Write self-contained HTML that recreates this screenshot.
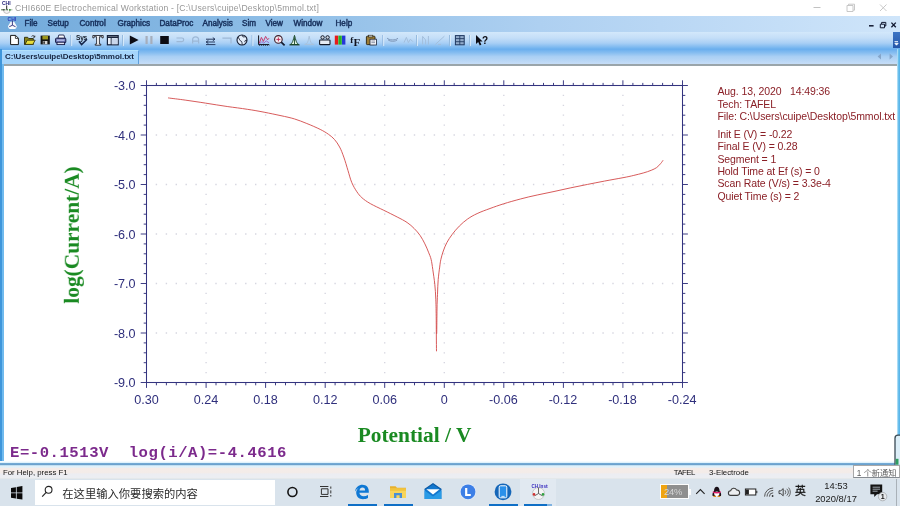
<!DOCTYPE html>
<html lang="zh">
<head>
<meta charset="utf-8">
<title>CHI660E Electrochemical Workstation</title>
<style>
html,body{margin:0;padding:0;}
body{width:900px;height:506px;overflow:hidden;background:#fff;position:relative;
 font-family:"Liberation Sans","Noto Sans CJK SC",sans-serif;font-size:8px;color:#1b2b4b;}
.abs{position:absolute;}
#root{position:absolute;left:0;top:0;width:900px;height:506px;overflow:hidden;will-change:transform;}
#title{left:0;top:0;width:900px;height:16px;background:#fff;}
#title .t{left:15px;top:2.5px;font-size:8.6px;color:#969696;white-space:nowrap;letter-spacing:0.225px;}
#menubar{left:0;top:16px;width:900px;height:16px;background:linear-gradient(90deg,#72aadb 0%,#8dbde6 30%,#aed0f1 60%,#cfe5fa 100%);}
#menubar span{position:absolute;top:2.9px;margin-left:0.5px;font-size:8.15px;color:#17305c;-webkit-text-stroke:0.45px #17305c;white-space:nowrap;}
#toolbar{left:0;top:32px;width:900px;height:17px;background:linear-gradient(180deg,#d3e8fb 0%,#c4def8 35%,#a9cff5 65%,#7db9f0 90%,#6cb0ee 100%);}
#tabbar{left:0;top:49px;width:900px;height:15px;background:linear-gradient(180deg,#68adee 0%,#86bdf0 25%,#a9cff4 50%,#c6ddf7 100%);}
#tab{left:1.5px;top:49.5px;width:137.5px;height:14.5px;background:#a6d5fb;border-right:1px solid #5d9fdc;border-top:1.2px solid #b4e2fc;box-sizing:border-box;}
#tab span{position:absolute;left:3.5px;top:1.1px;font-size:8px;font-weight:bold;color:#15233f;white-space:nowrap;letter-spacing:-0.03px;}
#grayline{left:3.5px;top:64px;width:893.5px;height:1.6px;background:#9aa5aa;}
#lborder{left:0;top:49px;width:1.5px;height:414px;background:#3f96da;}
#lborder2{left:1.5px;top:64px;width:2.3px;height:398.5px;background:#70baee;}
#rborder{left:896.7px;top:48.5px;width:3.3px;height:414px;background:linear-gradient(90deg,#c8e8fa,#6cc0ec 50%,#52b0e8);}
#bline{left:0;top:460.5px;width:900px;height:7px;background:linear-gradient(180deg,#fff 0,#dcf1fc 25%,#dcf1fc 30%,#6ea6d2 36%,#6a9fca 58%,#dcf1fc 66%,#e2f1fa 90%,#f2ecea 100%);}
#status{left:0;top:467.5px;width:900px;height:12px;background:linear-gradient(180deg,#f5ece8 0,#f3ece9 40%,#ecedf2 50%,#eceef2 82%,#dde3e4 92%,#d9e3ec 100%);}
#status span{position:absolute;top:0.5px;font-size:7.8px;color:#141414;white-space:nowrap;}
#taskbar{left:0;top:479px;width:900px;height:27px;background:#d9e3ec;}
#search{left:35px;top:480px;width:240px;height:24.5px;background:#fff;}
#search span{position:absolute;left:27.3px;top:4.6px;font-size:11.3px;color:#2a2a2a;white-space:nowrap;}
.ul{position:absolute;top:504px;height:2px;background:#0f6fc6;}
.tk{font-family:"Liberation Sans",sans-serif;font-size:12.6px;fill:#2f2f7c;}
.ttl{font-family:"Liberation Serif",serif;font-weight:bold;font-size:21.4px;fill:#1a8a22;}
#info{left:717.4px;top:85.4px;font-size:10.5px;line-height:12.35px;color:#8a1f26;white-space:nowrap;letter-spacing:-0.1px;}
#info .g2{margin-top:5.4px;}
#coord{left:10.3px;top:444.6px;font-family:"Liberation Mono",monospace;font-weight:bold;font-size:14.2px;color:#7c2a8c;white-space:pre;letter-spacing:0.48px;transform:scaleX(1.1);transform-origin:0 0;}
#tip{left:852.5px;top:464.5px;width:47px;height:13.5px;background:#fff;border:1px solid #a8a8a8;border-bottom:1.3px solid #858b92;box-sizing:border-box;}
#tip span{position:absolute;left:3.3px;top:0.2px;font-size:8.2px;color:#5c5c5c;white-space:nowrap;}
#clock{left:806px;top:478.6px;width:60px;text-align:center;font-size:9.4px;line-height:13.4px;color:#1a1a1a;}
</style>
</head>
<body>
<div id="root">

<!-- title bar -->
<div id="title" class="abs">
 <svg class="abs" style="left:0px;top:1px" width="14" height="14" viewBox="0 0 14 14">
  <text x="2" y="4" font-size="5" font-weight="bold" fill="#23237a" font-family="Liberation Sans,sans-serif">CHI</text>
  <path d="M3.400 8.800a3.400 3.700 0 0 0 6.800 0" fill="#f4f4f4" stroke="#b4b4b4" stroke-width=".8"/>
  <path d="M6.700 4.400v4.200" stroke="#222" stroke-width="1"/>
  <path d="M1.200 8.800h11" stroke="#2c5a2c" stroke-width="1" stroke-dasharray="1.600 1"/>
  <circle cx="9.800" cy="8.800" r=".9" fill="#3aa03a"/><circle cx="3.400" cy="8.800" r=".8" fill="#444"/>
 </svg>
 <div class="abs t">CHI660E Electrochemical Workstation - [C:\Users\cuipe\Desktop\5mmol.txt]</div>
 <svg class="abs" style="left:800px;top:0" width="100" height="16" viewBox="0 0 100 16">
  <path d="M13.5 7.5h7" stroke="#c2c2c2" stroke-width="1"/>
  <path d="M47 5.5h6v6h-6zM48.5 5.5v-1.3h6v6h-1.3" stroke="#c2c2c2" stroke-width=".9" fill="none"/>
  <path d="M80 4.5l6.5 6.5M86.5 4.5l-6.5 6.5" stroke="#c2c2c2" stroke-width=".9"/>
 </svg>
</div>

<!-- menu bar -->
<div id="menubar" class="abs">
 <svg class="abs" style="left:7px;top:1px" width="11" height="13" viewBox="0 0 11 13">
  <text x="0.600" y="4.200" font-size="4.800" font-weight="bold" fill="#2a38b8" font-family="Liberation Sans,sans-serif" textLength="8.600" lengthAdjust="spacingAndGlyphs">CHI</text>
  <path d="M1 9.200a4.400 2.400 0 0 0 8.800 0l-2.600-4.400h-3.600z" fill="#f6f8fb"/>
  <path d="M5.400 3.600v4.600l-3.200 1.600M5.400 8.200l3.200 1.600" stroke="#2a2a7a" stroke-width=".9" fill="none"/>
  <path d="M1.400 10.400a4 1.500 0 0 0 8 0" fill="#fff"/>
 </svg>
 <span style="left:24px">File</span><span style="left:47px">Setup</span><span style="left:79px">Control</span>
 <span style="left:117px">Graphics</span><span style="left:159px">DataProc</span><span style="left:202px">Analysis</span>
 <span style="left:241.5px">Sim</span><span style="left:265px">View</span><span style="left:293px">Window</span><span style="left:335px">Help</span>
 <svg class="abs" style="left:866px;top:4px" width="32" height="10" viewBox="0 0 32 10">
  <path d="M3 5.8h4.6" stroke="#101830" stroke-width="1.5"/>
  <path d="M14.3 4.2h4.2v3.6h-4.2zM15.6 4v-1.6h4.2v3.6h-1.2" stroke="#101830" stroke-width="1" fill="none"/>
  <path d="M25.4 2.6l4.4 4.6M29.8 2.6l-4.4 4.6" stroke="#101830" stroke-width="1.3"/>
 </svg>
</div>

<!-- toolbar -->
<div id="toolbar" class="abs">
<svg class="abs" style="left:0;top:0" width="900" height="17" viewBox="0 32 900 17">
 <g stroke="#8fb6de" stroke-width="1"><path d="M70.8 35v11M122.5 35v11M252 35v11M382.8 35v11M416.5 35v11M449.5 35v11M469.5 35v11"/></g>
 <g stroke="#e6f2fd" stroke-width=".8"><path d="M71.7 35v11M123.4 35v11M252.9 35v11M383.7 35v11M417.4 35v11M450.4 35v11M470.4 35v11"/></g>
 <!-- new -->
 <path d="M10.6 35.4h5l2.8 2.8v6.4h-7.8z" fill="#fff" stroke="#1a1a1a" stroke-width="1"/><path d="M15.4 35.6v2.8h2.8" fill="none" stroke="#1a1a1a" stroke-width=".8"/>
 <!-- open -->
 <path d="M24.5 44.5v-7.2h3.2l1 1.2h4.6v6z" fill="#8a8418" stroke="#2a2a10" stroke-width=".9"/>
 <path d="M25 44.4l2.2-4.2h8l-2.4 4.2z" fill="#e6dc3c" stroke="#2a2a10" stroke-width=".8"/>
 <path d="M31.5 36.4c1.2-1.2 2.6-.8 3 .4m.3-1.2v1.6h-1.6" stroke="#1a1a1a" stroke-width=".8" fill="none"/>
 <!-- save -->
 <rect x="40.6" y="35.6" width="9.2" height="8.8" fill="#141414"/>
 <rect x="42.4" y="35.8" width="5.6" height="3.6" fill="#9c961c"/>
 <rect x="42.8" y="41" width="4.6" height="3.2" fill="#d8d8d8"/><rect x="43.4" y="41.4" width="1.4" height="2.4" fill="#141414"/>
 <!-- print -->
 <path d="M57.800 38.400l1-3.400h5l1.200 3.400z" fill="#fafafc" stroke="#1c2048" stroke-width=".9"/>
 <rect x="55.600" y="38.200" width="10.200" height="4.600" rx=".8" fill="#7882c0" stroke="#161a44" stroke-width="1"/>
 <rect x="57" y="42.200" width="7.600" height="2.400" fill="#e4e6f4" stroke="#161a44" stroke-width=".9"/>
 <path d="M57 40.200h7.400" stroke="#dfe3ff" stroke-width=".8"/>
 <!-- sys check -->
 <text x="76" y="40.200" font-size="6.600" font-weight="bold" fill="#141c28" font-family="Liberation Sans,sans-serif" letter-spacing="-.25">Sys</text>
 <path d="M79 41.200l2.600 3.400 5.400-5.400" stroke="#16264a" stroke-width="1.600" fill="none"/>
 <!-- T -->
 <path d="M92.800 35.500h10.400v2.400h-1.200v-1.200h-2.600v7.400h1.400v1.100h-5.600v-1.100h1.400v-7.400h-2.600v1.200h-1.200z" fill="#fbfcfe" stroke="#1c1e26" stroke-width=".85"/>
 <!-- panel -->
 <rect x="107.400" y="35.600" width="10.800" height="9.200" fill="#e9eff8" stroke="#18243c" stroke-width="1.200"/>
 <path d="M107.400 37.200h10.800" stroke="#18243c" stroke-width="1.600"/>
 <path d="M111.200 37.400v7.400" stroke="#18243c" stroke-width="1"/>
 <rect x="111.800" y="38.400" width="5.800" height="5.800" fill="#c9d6ea"/>
 <!-- play / pause / stop -->
 <path d="M129.8 35.4v9l8.8-4.5z" fill="#0c0c14"/>
 <path d="M146.6 36v8M151.4 36v8" stroke="#a6aebc" stroke-width="2.2"/>
 <rect x="160.2" y="36" width="8.6" height="8" fill="#0c0c14"/>
 <!-- disabled icons -->
 <g stroke="#9db8d6" stroke-width="1.2" fill="none">
  <path d="M176.5 38h5.4a1.8 1.8 0 0 1 0 3.6h-5.4"/>
  <path d="M192.6 43.4v-3.6a3 3 0 0 1 6 0v3.6M192 41.2h7.2"/>
  <path d="M222.4 38.2h8.6v5.2"/>
 </g>
 <!-- exchange -->
 <path d="M206 39.2h8.8M212.8 37.6l2.2 1.6-2.2 1.6M215 42h-8.8M208.4 40.4l-2.2 1.6 2.2 1.6M206 44.6h9.4" stroke="#1a2a50" stroke-width=".9" fill="none"/>
 <!-- globe -->
 <circle cx="242" cy="40" r="5" fill="#e4eefa" stroke="#141c30" stroke-width="1.1"/>
 <path d="M238 37.4c2 1 1 3 2.6 3.4s1.4 2.6 1.6 4M242.4 35.2c-.6 1.6 1.2 2 2.4 1.6M247 40.4c-1.4-.6-2.6.4-2 1.800" stroke="#141c30" stroke-width=".9" fill="none"/>
 <!-- graph -->
 <path d="M258.6 35.4v9.200h10.600" stroke="#101018" stroke-width="1" fill="none"/>
 <path d="M259 45.400h10.400" stroke="#101018" stroke-width=".6" stroke-dasharray="1 1" fill="none"/>
 <path d="M259.400 43l2-5.600 2 4 2.200-5 2 3.400 1.400-1.600" stroke="#c83c6c" stroke-width="1" fill="none"/>
 <path d="M259.400 44l2.400-2.400 2 1.600 2.400-2.400 2.800 2" stroke="#9a5ac0" stroke-width=".8" fill="none"/>
 <!-- zoom -->
 <circle cx="278.400" cy="39.400" r="3.800" fill="#f6eef2" stroke="#3a1c28" stroke-width="1.100"/>
 <path d="M276.400 39.400h4M278.400 37.400v4" stroke="#c02050" stroke-width=".9"/>
 <path d="M281.200 42.200l3.400 3.200" stroke="#141c30" stroke-width="1.700"/>
 <!-- peak -->
 <path d="M289.400 44.900h10.200" stroke="#16301f" stroke-width="1"/>
 <path d="M290.200 44.500c2.300-.9 3-4.400 4.300-9.100c1.300 4.700 2 8.200 4.300 9.100z" fill="#e2f3e6" stroke="#1b4a2c" stroke-width="1"/>
 <path d="M294.500 37.400v7" stroke="#1b4a2c" stroke-width=".9"/>
 <!-- peak disabled -->
 <path d="M304.400 44.400h9.800M305.200 44.200c2.400-.4 3-3 4-8c1 5 1.600 7.600 4 8" fill="none" stroke="#a9c2dc" stroke-width="1"/>
 <!-- camera -->
 <rect x="319.600" y="40" width="10.400" height="4.600" rx=".6" fill="#e6ecf4" stroke="#141a28" stroke-width="1.100"/>
 <circle cx="322.600" cy="37.400" r="1.700" fill="#cfd8e4" stroke="#141a28" stroke-width="1"/>
 <circle cx="327.600" cy="37.400" r="1.700" fill="#cfd8e4" stroke="#141a28" stroke-width="1"/>
 <!-- RGB -->
 <rect x="334.800" y="35.600" width="3.400" height="9" fill="#e61c1c"/><rect x="338.400" y="35.600" width="3.400" height="9" fill="#28b428"/><rect x="342" y="35.600" width="3.400" height="9" fill="#2438d8"/>
 <!-- fF -->
 <text x="350.200" y="43.200" font-size="9" font-weight="bold" fill="#101420" font-family="Liberation Serif,serif">f</text>
 <text x="353.600" y="45.600" font-size="11" font-weight="bold" fill="#101420" font-family="Liberation Serif,serif">F</text>
 <!-- clipboard -->
 <rect x="366.400" y="36.200" width="8.600" height="8.400" rx=".8" fill="#9c7c34" stroke="#2a2410" stroke-width=".9"/>
 <rect x="368.600" y="35.200" width="4.200" height="1.800" fill="#d8d8d8" stroke="#2a2410" stroke-width=".6"/>
 <rect x="370" y="39.200" width="6.400" height="5.800" fill="#f2f4f8" stroke="#1c2438" stroke-width=".8"/>
 <path d="M371.400 41h3.600M371.400 42.600h3.600" stroke="#55607a" stroke-width=".6"/>
 <!-- disabled group -->
 <g stroke="#a4bfdc" stroke-width="1" fill="none">
  <path d="M404 42.600l2.400-5.200 2 5.200 2-3.400 2.400 2.400"/>
  <path d="M422.600 44.400v-8l3 3.600v4.400M428.400 36v8.600"/>
  <path d="M435.400 44.400l9-8.200M438 44.400h3"/>
 </g>
 <path d="M387 38c2 2.400 8.400 2.600 11 .2M388 39.800c2 2 7.200 2 9.200.2" stroke="#7c93b4" stroke-width=".9" fill="none"/>
 <!-- grid -->
 <rect x="455.400" y="35.600" width="8.800" height="9.200" fill="#93accb" stroke="#1e3860" stroke-width="1"/>
 <path d="M459.800 35.600v9.200M455.400 38.600h8.800M455.400 41.700h8.800" stroke="#1e3860" stroke-width=".85"/>
 <!-- help arrow -->
 <path d="M476 35v9l2.200-2 1.600 3.400 1.600-.8-1.600-3.200h2.800z" fill="#0c0c14"/>
 <text x="482" y="44.200" font-size="10" font-weight="bold" fill="#0c0c14" font-family="Liberation Sans,sans-serif">?</text>
</svg>

</div>
<div class="abs" style="left:893px;top:32px;width:7px;height:16px;background:linear-gradient(180deg,#3c74c4,#2456a8);"></div>
<svg class="abs" style="left:893px;top:40px" width="7" height="7" viewBox="0 0 7 7"><path d="M1.5 1.5h3.5M1.8 3.2l1.7 2 1.7-2z" stroke="#fff" stroke-width=".8" fill="#fff"/></svg>

<!-- tab bar -->
<div id="tabbar" class="abs"></div>
<div id="tab" class="abs"><span>C:\Users\cuipe\Desktop\5mmol.txt</span></div>
<svg class="abs" style="left:870px;top:52px" width="26" height="9" viewBox="0 0 26 9">
 <path d="M11 1.5v6l-3.4-3zM19.6 1.5v6l3.4-3z" fill="#86a6ca"/>
</svg>
<div id="grayline" class="abs"></div>
<div id="lborder" class="abs"></div><div id="lborder2" class="abs"></div>
<div id="rborder" class="abs"></div>

<!-- plot -->
<svg class="abs" style="left:0;top:0" width="900" height="506" viewBox="0 0 900 506">
<path d="M155.7 135.0h1.4M155.7 184.5h1.4M155.7 234.0h1.4M155.7 283.5h1.4M155.7 333.0h1.4M165.7 135.0h1.4M165.7 184.5h1.4M165.7 234.0h1.4M165.7 283.5h1.4M165.7 333.0h1.4M175.6 135.0h1.4M175.6 184.5h1.4M175.6 234.0h1.4M175.6 283.5h1.4M175.6 333.0h1.4M185.5 135.0h1.4M185.5 184.5h1.4M185.5 234.0h1.4M185.5 283.5h1.4M185.5 333.0h1.4M195.4 135.0h1.4M195.4 184.5h1.4M195.4 234.0h1.4M195.4 283.5h1.4M195.4 333.0h1.4M205.4 95.4h1.4M205.4 105.3h1.4M205.4 115.2h1.4M205.4 125.1h1.4M205.4 135.0h1.4M205.4 144.9h1.4M205.4 154.8h1.4M205.4 164.7h1.4M205.4 174.6h1.4M205.4 184.5h1.4M205.4 194.4h1.4M205.4 204.3h1.4M205.4 214.2h1.4M205.4 224.1h1.4M205.4 234.0h1.4M205.4 243.9h1.4M205.4 253.8h1.4M205.4 263.7h1.4M205.4 273.6h1.4M205.4 283.5h1.4M205.4 293.4h1.4M205.4 303.3h1.4M205.4 313.2h1.4M205.4 323.1h1.4M205.4 333.0h1.4M205.4 342.9h1.4M205.4 352.8h1.4M205.4 362.7h1.4M205.4 372.6h1.4M215.3 135.0h1.4M215.3 184.5h1.4M215.3 234.0h1.4M215.3 283.5h1.4M215.3 333.0h1.4M225.2 135.0h1.4M225.2 184.5h1.4M225.2 234.0h1.4M225.2 283.5h1.4M225.2 333.0h1.4M235.1 135.0h1.4M235.1 184.5h1.4M235.1 234.0h1.4M235.1 283.5h1.4M235.1 333.0h1.4M245.1 135.0h1.4M245.1 184.5h1.4M245.1 234.0h1.4M245.1 283.5h1.4M245.1 333.0h1.4M255.0 135.0h1.4M255.0 184.5h1.4M255.0 234.0h1.4M255.0 283.5h1.4M255.0 333.0h1.4M264.9 95.4h1.4M264.9 105.3h1.4M264.9 115.2h1.4M264.9 125.1h1.4M264.9 135.0h1.4M264.9 144.9h1.4M264.9 154.8h1.4M264.9 164.7h1.4M264.9 174.6h1.4M264.9 184.5h1.4M264.9 194.4h1.4M264.9 204.3h1.4M264.9 214.2h1.4M264.9 224.1h1.4M264.9 234.0h1.4M264.9 243.9h1.4M264.9 253.8h1.4M264.9 263.7h1.4M264.9 273.6h1.4M264.9 283.5h1.4M264.9 293.4h1.4M264.9 303.3h1.4M264.9 313.2h1.4M264.9 323.1h1.4M264.9 333.0h1.4M264.9 342.9h1.4M264.9 352.8h1.4M264.9 362.7h1.4M264.9 372.6h1.4M274.8 135.0h1.4M274.8 184.5h1.4M274.8 234.0h1.4M274.8 283.5h1.4M274.8 333.0h1.4M284.8 135.0h1.4M284.8 184.5h1.4M284.8 234.0h1.4M284.8 283.5h1.4M284.8 333.0h1.4M294.7 135.0h1.4M294.7 184.5h1.4M294.7 234.0h1.4M294.7 283.5h1.4M294.7 333.0h1.4M304.6 135.0h1.4M304.6 184.5h1.4M304.6 234.0h1.4M304.6 283.5h1.4M304.6 333.0h1.4M314.5 135.0h1.4M314.5 184.5h1.4M314.5 234.0h1.4M314.5 283.5h1.4M314.5 333.0h1.4M324.5 95.4h1.4M324.5 105.3h1.4M324.5 115.2h1.4M324.5 125.1h1.4M324.5 135.0h1.4M324.5 144.9h1.4M324.5 154.8h1.4M324.5 164.7h1.4M324.5 174.6h1.4M324.5 184.5h1.4M324.5 194.4h1.4M324.5 204.3h1.4M324.5 214.2h1.4M324.5 224.1h1.4M324.5 234.0h1.4M324.5 243.9h1.4M324.5 253.8h1.4M324.5 263.7h1.4M324.5 273.6h1.4M324.5 283.5h1.4M324.5 293.4h1.4M324.5 303.3h1.4M324.5 313.2h1.4M324.5 323.1h1.4M324.5 333.0h1.4M324.5 342.9h1.4M324.5 352.8h1.4M324.5 362.7h1.4M324.5 372.6h1.4M334.4 135.0h1.4M334.4 184.5h1.4M334.4 234.0h1.4M334.4 283.5h1.4M334.4 333.0h1.4M344.3 135.0h1.4M344.3 184.5h1.4M344.3 234.0h1.4M344.3 283.5h1.4M344.3 333.0h1.4M354.2 135.0h1.4M354.2 184.5h1.4M354.2 234.0h1.4M354.2 283.5h1.4M354.2 333.0h1.4M364.2 135.0h1.4M364.2 184.5h1.4M364.2 234.0h1.4M364.2 283.5h1.4M364.2 333.0h1.4M374.1 135.0h1.4M374.1 184.5h1.4M374.1 234.0h1.4M374.1 283.5h1.4M374.1 333.0h1.4M384.0 95.4h1.4M384.0 105.3h1.4M384.0 115.2h1.4M384.0 125.1h1.4M384.0 135.0h1.4M384.0 144.9h1.4M384.0 154.8h1.4M384.0 164.7h1.4M384.0 174.6h1.4M384.0 184.5h1.4M384.0 194.4h1.4M384.0 204.3h1.4M384.0 214.2h1.4M384.0 224.1h1.4M384.0 234.0h1.4M384.0 243.9h1.4M384.0 253.8h1.4M384.0 263.7h1.4M384.0 273.6h1.4M384.0 283.5h1.4M384.0 293.4h1.4M384.0 303.3h1.4M384.0 313.2h1.4M384.0 323.1h1.4M384.0 333.0h1.4M384.0 342.9h1.4M384.0 352.8h1.4M384.0 362.7h1.4M384.0 372.6h1.4M393.9 135.0h1.4M393.9 184.5h1.4M393.9 234.0h1.4M393.9 283.5h1.4M393.9 333.0h1.4M403.9 135.0h1.4M403.9 184.5h1.4M403.9 234.0h1.4M403.9 283.5h1.4M403.9 333.0h1.4M413.8 135.0h1.4M413.8 184.5h1.4M413.8 234.0h1.4M413.8 283.5h1.4M413.8 333.0h1.4M423.7 135.0h1.4M423.7 184.5h1.4M423.7 234.0h1.4M423.7 283.5h1.4M423.7 333.0h1.4M433.7 135.0h1.4M433.7 184.5h1.4M433.7 234.0h1.4M433.7 283.5h1.4M433.7 333.0h1.4M443.6 95.4h1.4M443.6 105.3h1.4M443.6 115.2h1.4M443.6 125.1h1.4M443.6 135.0h1.4M443.6 144.9h1.4M443.6 154.8h1.4M443.6 164.7h1.4M443.6 174.6h1.4M443.6 184.5h1.4M443.6 194.4h1.4M443.6 204.3h1.4M443.6 214.2h1.4M443.6 224.1h1.4M443.6 234.0h1.4M443.6 243.9h1.4M443.6 253.8h1.4M443.6 263.7h1.4M443.6 273.6h1.4M443.6 283.5h1.4M443.6 293.4h1.4M443.6 303.3h1.4M443.6 313.2h1.4M443.6 323.1h1.4M443.6 333.0h1.4M443.6 342.9h1.4M443.6 352.8h1.4M443.6 362.7h1.4M443.6 372.6h1.4M453.5 135.0h1.4M453.5 184.5h1.4M453.5 234.0h1.4M453.5 283.5h1.4M453.5 333.0h1.4M463.4 135.0h1.4M463.4 184.5h1.4M463.4 234.0h1.4M463.4 283.5h1.4M463.4 333.0h1.4M473.4 135.0h1.4M473.4 184.5h1.4M473.4 234.0h1.4M473.4 283.5h1.4M473.4 333.0h1.4M483.3 135.0h1.4M483.3 184.5h1.4M483.3 234.0h1.4M483.3 283.5h1.4M483.3 333.0h1.4M493.2 135.0h1.4M493.2 184.5h1.4M493.2 234.0h1.4M493.2 283.5h1.4M493.2 333.0h1.4M503.1 95.4h1.4M503.1 105.3h1.4M503.1 115.2h1.4M503.1 125.1h1.4M503.1 135.0h1.4M503.1 144.9h1.4M503.1 154.8h1.4M503.1 164.7h1.4M503.1 174.6h1.4M503.1 184.5h1.4M503.1 194.4h1.4M503.1 204.3h1.4M503.1 214.2h1.4M503.1 224.1h1.4M503.1 234.0h1.4M503.1 243.9h1.4M503.1 253.8h1.4M503.1 263.7h1.4M503.1 273.6h1.4M503.1 283.5h1.4M503.1 293.4h1.4M503.1 303.3h1.4M503.1 313.2h1.4M503.1 323.1h1.4M503.1 333.0h1.4M503.1 342.9h1.4M503.1 352.8h1.4M503.1 362.7h1.4M503.1 372.6h1.4M513.1 135.0h1.4M513.1 184.5h1.4M513.1 234.0h1.4M513.1 283.5h1.4M513.1 333.0h1.4M523.0 135.0h1.4M523.0 184.5h1.4M523.0 234.0h1.4M523.0 283.5h1.4M523.0 333.0h1.4M532.9 135.0h1.4M532.9 184.5h1.4M532.9 234.0h1.4M532.9 283.5h1.4M532.9 333.0h1.4M542.8 135.0h1.4M542.8 184.5h1.4M542.8 234.0h1.4M542.8 283.5h1.4M542.8 333.0h1.4M552.8 135.0h1.4M552.8 184.5h1.4M552.8 234.0h1.4M552.8 283.5h1.4M552.8 333.0h1.4M562.7 95.4h1.4M562.7 105.3h1.4M562.7 115.2h1.4M562.7 125.1h1.4M562.7 135.0h1.4M562.7 144.9h1.4M562.7 154.8h1.4M562.7 164.7h1.4M562.7 174.6h1.4M562.7 184.5h1.4M562.7 194.4h1.4M562.7 204.3h1.4M562.7 214.2h1.4M562.7 224.1h1.4M562.7 234.0h1.4M562.7 243.9h1.4M562.7 253.8h1.4M562.7 263.7h1.4M562.7 273.6h1.4M562.7 283.5h1.4M562.7 293.4h1.4M562.7 303.3h1.4M562.7 313.2h1.4M562.7 323.1h1.4M562.7 333.0h1.4M562.7 342.9h1.4M562.7 352.8h1.4M562.7 362.7h1.4M562.7 372.6h1.4M572.6 135.0h1.4M572.6 184.5h1.4M572.6 234.0h1.4M572.6 283.5h1.4M572.6 333.0h1.4M582.5 135.0h1.4M582.5 184.5h1.4M582.5 234.0h1.4M582.5 283.5h1.4M582.5 333.0h1.4M592.5 135.0h1.4M592.5 184.5h1.4M592.5 234.0h1.4M592.5 283.5h1.4M592.5 333.0h1.4M602.4 135.0h1.4M602.4 184.5h1.4M602.4 234.0h1.4M602.4 283.5h1.4M602.4 333.0h1.4M612.3 135.0h1.4M612.3 184.5h1.4M612.3 234.0h1.4M612.3 283.5h1.4M612.3 333.0h1.4M622.2 95.4h1.4M622.2 105.3h1.4M622.2 115.2h1.4M622.2 125.1h1.4M622.2 135.0h1.4M622.2 144.9h1.4M622.2 154.8h1.4M622.2 164.7h1.4M622.2 174.6h1.4M622.2 184.5h1.4M622.2 194.4h1.4M622.2 204.3h1.4M622.2 214.2h1.4M622.2 224.1h1.4M622.2 234.0h1.4M622.2 243.9h1.4M622.2 253.8h1.4M622.2 263.7h1.4M622.2 273.6h1.4M622.2 283.5h1.4M622.2 293.4h1.4M622.2 303.3h1.4M622.2 313.2h1.4M622.2 323.1h1.4M622.2 333.0h1.4M622.2 342.9h1.4M622.2 352.8h1.4M622.2 362.7h1.4M622.2 372.6h1.4M632.2 135.0h1.4M632.2 184.5h1.4M632.2 234.0h1.4M632.2 283.5h1.4M632.2 333.0h1.4M642.1 135.0h1.4M642.1 184.5h1.4M642.1 234.0h1.4M642.1 283.5h1.4M642.1 333.0h1.4M652.0 135.0h1.4M652.0 184.5h1.4M652.0 234.0h1.4M652.0 283.5h1.4M652.0 333.0h1.4M661.9 135.0h1.4M661.9 184.5h1.4M661.9 234.0h1.4M661.9 283.5h1.4M661.9 333.0h1.4M671.9 135.0h1.4M671.9 184.5h1.4M671.9 234.0h1.4M671.9 283.5h1.4M671.9 333.0h1.4" stroke="#d6d6e0" stroke-width="1.3" fill="none"/>
<rect x="146.5" y="85.5" width="536.0" height="297.0" fill="none" stroke="#34347f" stroke-width="1.05"/>
<path d="M146.5 85.5v-5.2M146.5 382.5v5.4M156.4 85.5v-2.6M156.4 382.5v2.8M166.4 85.5v-2.6M166.4 382.5v2.8M176.3 85.5v-2.6M176.3 382.5v2.8M186.2 85.5v-2.6M186.2 382.5v2.8M196.1 85.5v-2.6M196.1 382.5v2.8M206.1 85.5v-5.2M206.1 382.5v5.4M216.0 85.5v-2.6M216.0 382.5v2.8M225.9 85.5v-2.6M225.9 382.5v2.8M235.8 85.5v-2.6M235.8 382.5v2.8M245.8 85.5v-2.6M245.8 382.5v2.8M255.7 85.5v-2.6M255.7 382.5v2.8M265.6 85.5v-5.2M265.6 382.5v5.4M275.5 85.5v-2.6M275.5 382.5v2.8M285.5 85.5v-2.6M285.5 382.5v2.8M295.4 85.5v-2.6M295.4 382.5v2.8M305.3 85.5v-2.6M305.3 382.5v2.8M315.2 85.5v-2.6M315.2 382.5v2.8M325.2 85.5v-5.2M325.2 382.5v5.4M335.1 85.5v-2.6M335.1 382.5v2.8M345.0 85.5v-2.6M345.0 382.5v2.8M354.9 85.5v-2.6M354.9 382.5v2.8M364.9 85.5v-2.6M364.9 382.5v2.8M374.8 85.5v-2.6M374.8 382.5v2.8M384.7 85.5v-5.2M384.7 382.5v5.4M394.6 85.5v-2.6M394.6 382.5v2.8M404.6 85.5v-2.6M404.6 382.5v2.8M414.5 85.5v-2.6M414.5 382.5v2.8M424.4 85.5v-2.6M424.4 382.5v2.8M434.4 85.5v-2.6M434.4 382.5v2.8M444.3 85.5v-5.2M444.3 382.5v5.4M454.2 85.5v-2.6M454.2 382.5v2.8M464.1 85.5v-2.6M464.1 382.5v2.8M474.1 85.5v-2.6M474.1 382.5v2.8M484.0 85.5v-2.6M484.0 382.5v2.8M493.9 85.5v-2.6M493.9 382.5v2.8M503.8 85.5v-5.2M503.8 382.5v5.4M513.8 85.5v-2.6M513.8 382.5v2.8M523.7 85.5v-2.6M523.7 382.5v2.8M533.6 85.5v-2.6M533.6 382.5v2.8M543.5 85.5v-2.6M543.5 382.5v2.8M553.5 85.5v-2.6M553.5 382.5v2.8M563.4 85.5v-5.2M563.4 382.5v5.4M573.3 85.5v-2.6M573.3 382.5v2.8M583.2 85.5v-2.6M583.2 382.5v2.8M593.2 85.5v-2.6M593.2 382.5v2.8M603.1 85.5v-2.6M603.1 382.5v2.8M613.0 85.5v-2.6M613.0 382.5v2.8M622.9 85.5v-5.2M622.9 382.5v5.4M632.9 85.5v-2.6M632.9 382.5v2.8M642.8 85.5v-2.6M642.8 382.5v2.8M652.7 85.5v-2.6M652.7 382.5v2.8M662.6 85.5v-2.6M662.6 382.5v2.8M672.6 85.5v-2.6M672.6 382.5v2.8M682.5 85.5v-5.2M682.5 382.5v5.4M146.5 85.5h-5.8M682.5 85.5h5.4M146.5 95.4h-2.8M682.5 95.4h2.8M146.5 105.3h-2.8M682.5 105.3h2.8M146.5 115.2h-2.8M682.5 115.2h2.8M146.5 125.1h-2.8M682.5 125.1h2.8M146.5 135.0h-5.8M682.5 135.0h5.4M146.5 144.9h-2.8M682.5 144.9h2.8M146.5 154.8h-2.8M682.5 154.8h2.8M146.5 164.7h-2.8M682.5 164.7h2.8M146.5 174.6h-2.8M682.5 174.6h2.8M146.5 184.5h-5.8M682.5 184.5h5.4M146.5 194.4h-2.8M682.5 194.4h2.8M146.5 204.3h-2.8M682.5 204.3h2.8M146.5 214.2h-2.8M682.5 214.2h2.8M146.5 224.1h-2.8M682.5 224.1h2.8M146.5 234.0h-5.8M682.5 234.0h5.4M146.5 243.9h-2.8M682.5 243.9h2.8M146.5 253.8h-2.8M682.5 253.8h2.8M146.5 263.7h-2.8M682.5 263.7h2.8M146.5 273.6h-2.8M682.5 273.6h2.8M146.5 283.5h-5.8M682.5 283.5h5.4M146.5 293.4h-2.8M682.5 293.4h2.8M146.5 303.3h-2.8M682.5 303.3h2.8M146.5 313.2h-2.8M682.5 313.2h2.8M146.5 323.1h-2.8M682.5 323.1h2.8M146.5 333.0h-5.8M682.5 333.0h5.4M146.5 342.9h-2.8M682.5 342.9h2.8M146.5 352.8h-2.8M682.5 352.8h2.8M146.5 362.7h-2.8M682.5 362.7h2.8M146.5 372.6h-2.8M682.5 372.6h2.8M146.5 382.5h-5.8M682.5 382.5h5.4" stroke="#34347f" stroke-width="0.95" fill="none"/>
<text x="135.6" y="90.2" text-anchor="end" class="tk">-3.0</text>
<text x="135.6" y="139.7" text-anchor="end" class="tk">-4.0</text>
<text x="135.6" y="189.2" text-anchor="end" class="tk">-5.0</text>
<text x="135.6" y="238.7" text-anchor="end" class="tk">-6.0</text>
<text x="135.6" y="288.2" text-anchor="end" class="tk">-7.0</text>
<text x="135.6" y="337.7" text-anchor="end" class="tk">-8.0</text>
<text x="135.6" y="387.2" text-anchor="end" class="tk">-9.0</text>
<text x="146.5" y="404.4" text-anchor="middle" class="tk">0.30</text>
<text x="206.1" y="404.4" text-anchor="middle" class="tk">0.24</text>
<text x="265.6" y="404.4" text-anchor="middle" class="tk">0.18</text>
<text x="325.2" y="404.4" text-anchor="middle" class="tk">0.12</text>
<text x="384.7" y="404.4" text-anchor="middle" class="tk">0.06</text>
<text x="444.3" y="404.4" text-anchor="middle" class="tk">0</text>
<text x="503.4" y="404.4" text-anchor="middle" class="tk">-0.06</text>
<text x="563.0" y="404.4" text-anchor="middle" class="tk">-0.12</text>
<text x="622.5" y="404.4" text-anchor="middle" class="tk">-0.18</text>
<text x="682.1" y="404.4" text-anchor="middle" class="tk">-0.24</text>
<path d="M168.1 97.9C170.9 98.3 179.0 99.2 185.2 100.1C191.4 101.0 198.4 102.0 205.4 103.1C212.4 104.2 220.2 105.5 227.2 106.5C234.2 107.5 241.2 108.3 247.3 109.3C253.5 110.2 258.5 111.1 264.1 112.2C269.7 113.3 275.9 114.6 281.0 115.7C286.1 116.8 290.1 117.6 294.4 118.9C298.7 120.2 302.5 121.8 306.8 123.5C311.1 125.2 316.6 127.6 320.2 129.4C323.8 131.2 326.2 132.7 328.6 134.4C331.0 136.1 332.7 137.4 334.5 139.5C336.3 141.6 338.1 144.1 339.6 147.0C341.2 149.9 342.4 153.2 343.8 157.1C345.2 161.0 346.7 166.3 348.0 170.6C349.3 174.8 350.3 179.1 351.8 182.6C353.3 186.1 355.2 189.3 356.9 191.8C358.6 194.3 359.7 195.7 361.9 197.7C364.1 199.7 366.6 201.5 370.3 203.6C374.0 205.7 379.3 208.1 383.8 210.3C388.3 212.5 393.3 215.0 397.2 217.0C401.1 219.0 404.3 220.6 407.1 222.5C409.9 224.4 412.0 226.3 414.2 228.5C416.4 230.7 418.4 233.0 420.2 235.6C422.0 238.2 423.5 241.1 424.9 243.9C426.3 246.7 427.5 249.6 428.5 252.2C429.5 254.8 430.4 256.4 431.1 259.3C431.8 262.2 432.2 265.4 432.8 269.6C433.4 273.8 434.3 279.5 434.8 284.4C435.3 289.3 435.6 293.8 435.8 299.2C436.0 304.6 436.1 307.8 436.2 316.5C436.3 325.2 436.4 345.5 436.5 351.3" stroke="#d24848" stroke-width="0.9" fill="none"/>
<path d="M436.7 333.8C436.8 329.7 436.9 315.6 437.0 309.0C437.1 302.4 437.3 299.2 437.5 294.3C437.7 289.4 437.8 284.0 438.2 279.5C438.6 275.0 439.2 270.5 439.7 267.1C440.1 263.7 440.3 262.0 440.9 259.3C441.5 256.6 442.3 253.8 443.3 251.0C444.3 248.2 445.3 245.5 446.8 242.7C448.3 239.9 450.1 237.2 452.2 234.4C454.3 231.6 456.7 228.7 459.3 226.1C461.9 223.5 464.6 221.1 467.6 219.0C470.6 216.9 473.4 215.3 477.1 213.6C480.8 211.8 485.6 210.1 490.0 208.5C494.4 206.9 498.5 205.4 503.6 203.8C508.7 202.2 514.8 200.5 520.4 199.0C526.0 197.5 531.6 196.2 537.2 195.0C542.8 193.8 548.4 192.7 554.0 191.5C559.6 190.3 565.2 189.0 570.8 187.8C576.4 186.6 582.0 185.5 587.6 184.4C593.2 183.3 598.5 182.2 604.4 181.1C610.3 180.0 618.1 178.6 623.0 177.7C627.9 176.8 630.4 176.2 633.8 175.4C637.2 174.6 640.3 173.8 643.2 173.0C646.1 172.2 649.0 171.2 651.2 170.3C653.4 169.4 655.0 168.7 656.6 167.6C658.2 166.5 659.5 164.8 660.6 163.6C661.7 162.4 662.7 160.8 663.1 160.2" stroke="#d24848" stroke-width="0.9" fill="none"/>
<text x="414.5" y="441.7" text-anchor="middle" class="ttl">Potential / V</text>
<text transform="translate(78.8 235) rotate(-90)" text-anchor="middle" class="ttl">log(Current/A)</text>
</svg>

<div id="info" class="abs">
 <div>Aug. 13, 2020&nbsp;&nbsp; 14:49:36</div><div>Tech: TAFEL</div><div>File: C:\Users\cuipe\Desktop\5mmol.txt</div>
 <div class="g2">Init E (V) = -0.22</div><div>Final E (V) = 0.28</div><div>Segment = 1</div>
 <div>Hold Time at Ef (s) = 0</div><div>Scan Rate (V/s) = 3.3e-4</div><div>Quiet Time (s) = 2</div>
</div>

<div id="coord" class="abs">E=-0.1513V  log(i/A)=-4.4616</div>

<!-- scroll thumb at right -->
<svg class="abs" style="left:892px;top:433px;z-index:3" width="8" height="33" viewBox="892 433 8 33">
 <path d="M895 464.700V438.200a3 3 0 0 1 3-3h2V464.700z" fill="#dceef8"/>
 <path d="M895 464.700V438.200a3 3 0 0 1 3-3h2" fill="none" stroke="#3a4a54" stroke-width="1.300"/>
 <rect x="895.700" y="458.800" width="2.800" height="5.900" fill="#2f9e62"/>
</svg>

<div id="bline" class="abs"></div>
<div id="status" class="abs">
 <span style="left:3px">For Help, press F1</span>
 <span style="left:673.8px;letter-spacing:-0.55px">TAFEL</span>
 <span style="left:709px">3-Electrode</span>
</div>
<div id="tip" class="abs"><span>1 个新通知</span></div>

<!-- taskbar -->
<div id="taskbar" class="abs"></div>
<div id="search" class="abs">
 <svg class="abs" style="left:6px;top:5.4px" width="13" height="13" viewBox="0 0 13 13">
  <circle cx="7.6" cy="4.8" r="3.4" fill="none" stroke="#222" stroke-width="1.1"/><path d="M5.2 7.3L1.2 11.6" stroke="#222" stroke-width="1.2"/>
 </svg>
 <span>在这里输入你要搜索的内容</span>
</div>
<!-- start -->
<svg class="abs" style="left:10.8px;top:486px" width="11.8" height="13.6" viewBox="0 0 12 12" preserveAspectRatio="none">
 <path d="M0 1.700L5 1v4.700H0zM5.800.900L11.600 0v5.700H5.800zM0 6.400h5v4.700L0 10.400zM5.800 6.400h5.800V12l-5.800-.8z" fill="#0a0a0a"/>
</svg>
<!-- cortana -->
<svg class="abs" style="left:285px;top:485px" width="15" height="15" viewBox="0 0 15 15"><circle cx="7.400" cy="7" r="4.500" fill="none" stroke="#141414" stroke-width="1.600"/></svg>
<!-- task view -->
<svg class="abs" style="left:318px;top:485px" width="17" height="14" viewBox="0 0 17 14">
 <path d="M2 1.500h8.400M2 11.500h8.400M3.400 3.800h6.600v5.600H3.400zM12.800 1.500v2.200M12.800 5.400v3M12.800 10v1.600" stroke="#333" stroke-width="1" fill="none"/>
</svg>
<!-- edge -->
<svg class="abs" style="left:354px;top:484px" width="16" height="16" viewBox="0 0 16 16">
 <path d="M1 7.600C1.600 3 5 .8 8.400.8c4 0 6.400 2.800 6.400 6.400v1.600H5.400c.2 2.200 2 3.400 4.200 3.400 1.600 0 3-.4 4.400-1.200v3c-1.400.8-3.200 1.200-5 1.200-4 0-6.800-2.600-6.800-6.400 0-2 1-3.800 2.600-5C3.200 4.600 2 6 1 7.600zM5.500 6.400h5.600c0-1.800-1-2.800-2.600-2.800s-2.800 1.200-3 2.800z" fill="#0f78d4"/>
</svg>
<div class="ul" style="left:348px;width:28.500px"></div>
<!-- explorer -->
<svg class="abs" style="left:389px;top:484px" width="18" height="16" viewBox="0 0 18 16">
 <path d="M1 2.200h5.600l1.400 1.600h9v2H1z" fill="#e8b12c"/>
 <rect x="1" y="4.600" width="16" height="9.400" fill="#f8d55c"/>
 <path d="M5 14V9h8v5h-2.400v-2.800H7.400V14z" fill="#4a8fd6"/>
 <rect x="1" y="4.600" width="16" height="2.200" fill="#f2c43c"/>
</svg>
<div class="ul" style="left:384px;width:28.500px"></div>
<!-- mail -->
<svg class="abs" style="left:424px;top:483px" width="18" height="17" viewBox="0 0 18 17">
 <path d="M.6 6.600L9 .8l8.400 5.800V16H.6z" fill="#1378cf"/>
 <path d="M2.400 6.200h13.200L9 11.400z" fill="#fff"/>
 <path d="M.6 7.600L9 13.400l8.400-5.800V16H.6z" fill="#2a9be6"/>
 <path d="M.6 6.600L9 .8l8.400 5.800" fill="none" stroke="#0b5aa6" stroke-width="1.200"/>
</svg>
<!-- L -->
<svg class="abs" style="left:459px;top:483px" width="18" height="18" viewBox="0 0 18 18">
 <circle cx="9" cy="8.800" r="8.200" fill="#e4ecf8"/><circle cx="9" cy="8.800" r="7.400" fill="#3d7fe6"/>
 <path d="M7.200 5v7h4.600" stroke="#fff" stroke-width="2.200" fill="none"/>
</svg>
<!-- phone -->
<svg class="abs" style="left:494px;top:483px" width="18" height="18" viewBox="0 0 18 18">
 <circle cx="9" cy="8.800" r="8.400" fill="#1566b8"/>
 <rect x="5.200" y="2.800" width="7.600" height="12" rx="1.400" fill="#2a90ea" stroke="#fff" stroke-width="1"/>
 <path d="M7.400 13.400h3.200" stroke="#fff" stroke-width=".8"/>
</svg>
<div class="ul" style="left:489px;width:28.500px"></div>
<!-- CHI app (active) -->
<div class="abs" style="left:520px;top:479px;width:36px;height:27px;background:#e1e9f1;"></div>
<svg class="abs" style="left:529px;top:482px" width="19" height="19" viewBox="0 0 19 19">
 <circle cx="9.500" cy="11.500" r="6" fill="#f4f4f4" stroke="#b8b8b8" stroke-width=".7"/>
 <text x="2.400" y="5.600" font-size="4.600" font-weight="bold" fill="#3b2fc0" font-family="Liberation Sans,sans-serif">CH Instr</text>
 <path d="M9.500 5.500v6l-4 2.400M9.500 11.500l4 2.400" stroke="#444" stroke-width=".8" fill="none"/>
 <circle cx="5" cy="12.400" r="1.300" fill="#d03030"/><circle cx="14" cy="12.400" r="1.300" fill="#2fa040"/>
</svg>
<div class="ul" style="left:523.800px;width:23.500px"></div>
<div class="ul" style="left:547.300px;width:5px;background:#7fb2e0"></div>
<!-- battery widget -->
<div class="abs" style="left:659.800px;top:484.300px;width:29px;height:14.400px;box-sizing:border-box;border:1.200px solid #fdfdfd;background:linear-gradient(90deg,#efa412 0,#efa412 22%,#8f8f8f 22%);"></div>
<div class="abs" style="left:689px;top:488.500px;width:2px;height:6px;background:#fdfdfd"></div>
<div class="abs" style="left:664px;top:486.200px;font-size:9.400px;color:#d6d6d6;letter-spacing:-.2px;">24%</div>
<!-- tray -->
<svg class="abs" style="left:692px;top:482px" width="120" height="20" viewBox="692 482 120 20">
 <path d="M696.200 493.800l4.200-4.200 4.200 4.200" stroke="#222" stroke-width="1.100" fill="none"/>
 <!-- qq -->
 <path d="M712.600 496c-.6-2.400.6-3.600 1.400-5.200.2-2.400 1.200-4 2.800-4s2.600 1.600 2.800 4c.8 1.600 2 2.800 1.400 5.200z" fill="#1a1018"/>
 <ellipse cx="716.800" cy="493.800" rx="2.600" ry="2.400" fill="#fff"/>
 <path d="M713 491.200c2 1.200 5.600 1.200 7.600 0l.4 1.400c-2.400 1.200-6 1.200-8.400 0z" fill="#e0206c"/>
 <path d="M713.400 496.400h2.600M717.600 496.400h2.600" stroke="#e08a1c" stroke-width="1.200"/>
 <!-- cloud -->
 <path d="M730.800 495.400a2.300 2.300 0 0 1-.2-4.600 3.200 3.200 0 0 1 6-.8 2.700 2.700 0 0 1 .6 5.400z" fill="#eceef0" stroke="#3a3a3a" stroke-width="1.100"/>
 <!-- battery -->
 <rect x="745.400" y="489" width="10.400" height="6" fill="#fff" stroke="#222" stroke-width="1"/><rect x="745.900" y="489.500" width="3" height="5" fill="#222"/><path d="M756.800 490.800v2.400" stroke="#222" stroke-width="1"/>
 <!-- wifi -->
 <g stroke="#555" stroke-width="1" fill="none"><path d="M764.600 496.600a8.600 8.600 0 0 1 8.600-8.600M767 496.600a6.200 6.200 0 0 1 6.200-6.200M769.400 496.600a3.800 3.800 0 0 1 3.800-3.800"/></g><circle cx="772.600" cy="496" r=".9" fill="#333"/>
 <!-- volume -->
 <path d="M779 490.800h1.800l2.400-2.200v7.200l-2.400-2.200H779z" fill="none" stroke="#333" stroke-width=".9"/>
 <path d="M785 490.200a3 3 0 0 1 0 4M786.800 488.800a5 5 0 0 1 0 6.800M788.600 487.600a7 7 0 0 1 0 9.200" stroke="#444" stroke-width=".8" fill="none"/>
</svg>
<div class="abs" style="left:795px;top:484px;font-size:10.8px;color:#111;line-height:14px;-webkit-text-stroke:.3px #111;">英</div>
<!-- notification -->
<svg class="abs" style="left:868px;top:483px" width="22" height="20" viewBox="0 0 22 20">
 <path d="M2.400 1.600h11.800v9.600H9l-2.800 2.800v-2.800H2.400z" fill="#141414"/>
 <path d="M4.600 4.200h7.400M4.600 6.200h7.400M4.600 8.200h5" stroke="#d9e3ec" stroke-width=".7"/>
 <circle cx="14.600" cy="13.600" r="4.200" fill="#e6e9ec" stroke="#a4a8ac" stroke-width=".8"/>
 <text x="14.600" y="16.200" font-size="7" font-weight="bold" text-anchor="middle" fill="#141414" font-family="Liberation Sans,sans-serif">1</text>
</svg>
<div class="abs" style="left:896.300px;top:479px;width:1px;height:27px;background:#a9b1b8"></div>

<div id="clock" class="abs">14:53<br>2020/8/17</div>

</div>
</body>
</html>
